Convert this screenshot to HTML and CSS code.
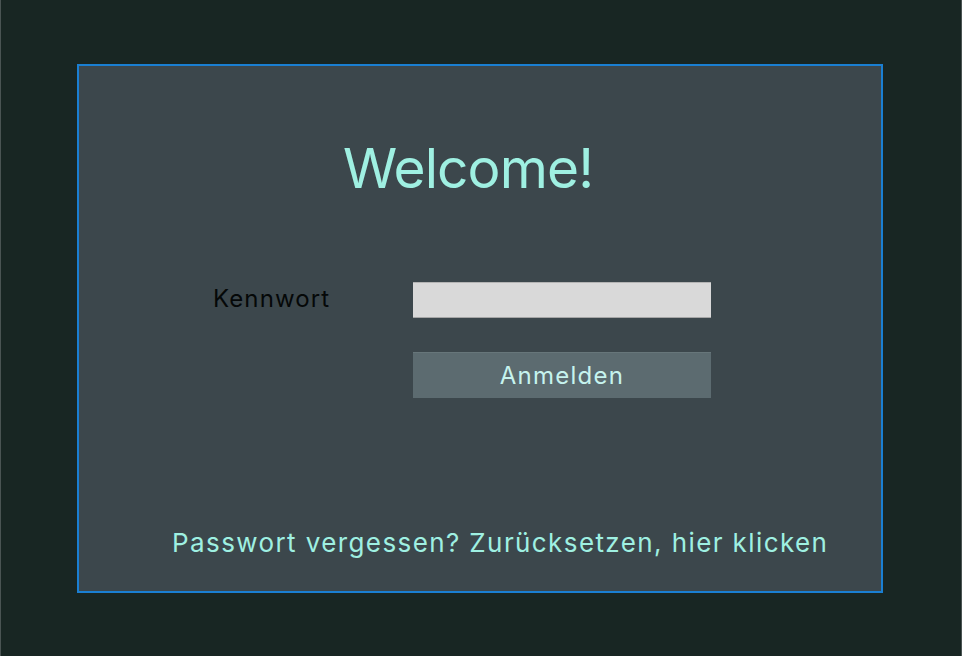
FILE: index.html
```html
<!DOCTYPE html>
<html lang="de">
<head>
<meta charset="utf-8">
<title>Welcome</title>
<link rel="stylesheet" href="styles.css">
</head>
<body>
<div class="page">
  <main class="panel">
    <h1 class="title">Welcome!</h1>
    <form class="form">
      <label class="label" for="pw">Kennwort</label>
      <input class="input" id="pw" type="password">
      <span></span>
      <button class="button" type="button">Anmelden</button>
    </form>
    <a class="link" href="#">Passwort vergessen? Zurücksetzen, hier klicken</a>
  </main>
</div>
</body>
</html>
```
FILE: styles.css
```css
html, body {
  margin: 0;
  padding: 0;
  background: #182623;
}
.page {
  width: 962px;
  height: 656px;
  box-sizing: border-box;
  border-left: 1px solid #4a5453;
  border-right: 1px solid #4a5453;
  padding: 64px 0 0 76px;
  font-family: Inter, "Noto Sans", sans-serif;
}
.panel {
  width: 806px;
  height: 529px;
  box-sizing: border-box;
  border: 2px solid #1a7fd2;
  background: #3c474c;
  display: flex;
  flex-direction: column;
}
.title {
  margin: 72px 0 0 264px;
  font-size: 55px;
  font-weight: 400;
  line-height: 60px;
  letter-spacing: -0.9px;
  color: #9ff0e2;
}
.form {
  margin: 84px 0 0 134px;
  display: grid;
  grid-template-columns: 200px 298px;
  row-gap: 34px;
  align-items: center;
}
.label {
  font-size: 24px;
  color: #050808;
  line-height: 34px;
  letter-spacing: 1.1px;
  align-self: start;
}
.input {
  width: 298px;
  height: 36px;
  box-sizing: border-box;
  margin: 0;
  border: none;
  border-top: 1px solid #b4b4b4;
  border-bottom: 1px solid #a6a6a6;
  background: #d9d9d9;
  outline: none;
}
.button {
  width: 298px;
  height: 46px;
  box-sizing: border-box;
  margin: 0;
  border: none;
  border-top: 1px solid #67767a;
  background: #5c6b70;
  color: #c6f3ee;
  font-family: Inter, "Noto Sans", sans-serif;
  font-size: 24px;
  letter-spacing: 1.25px;
  padding: 0;
}
.link {
  margin: auto 0 32px 93px;
  font-size: 26px;
  line-height: 32px;
  letter-spacing: 1.4px;
  color: #9ff0e2;
  text-decoration: none;
}
```
